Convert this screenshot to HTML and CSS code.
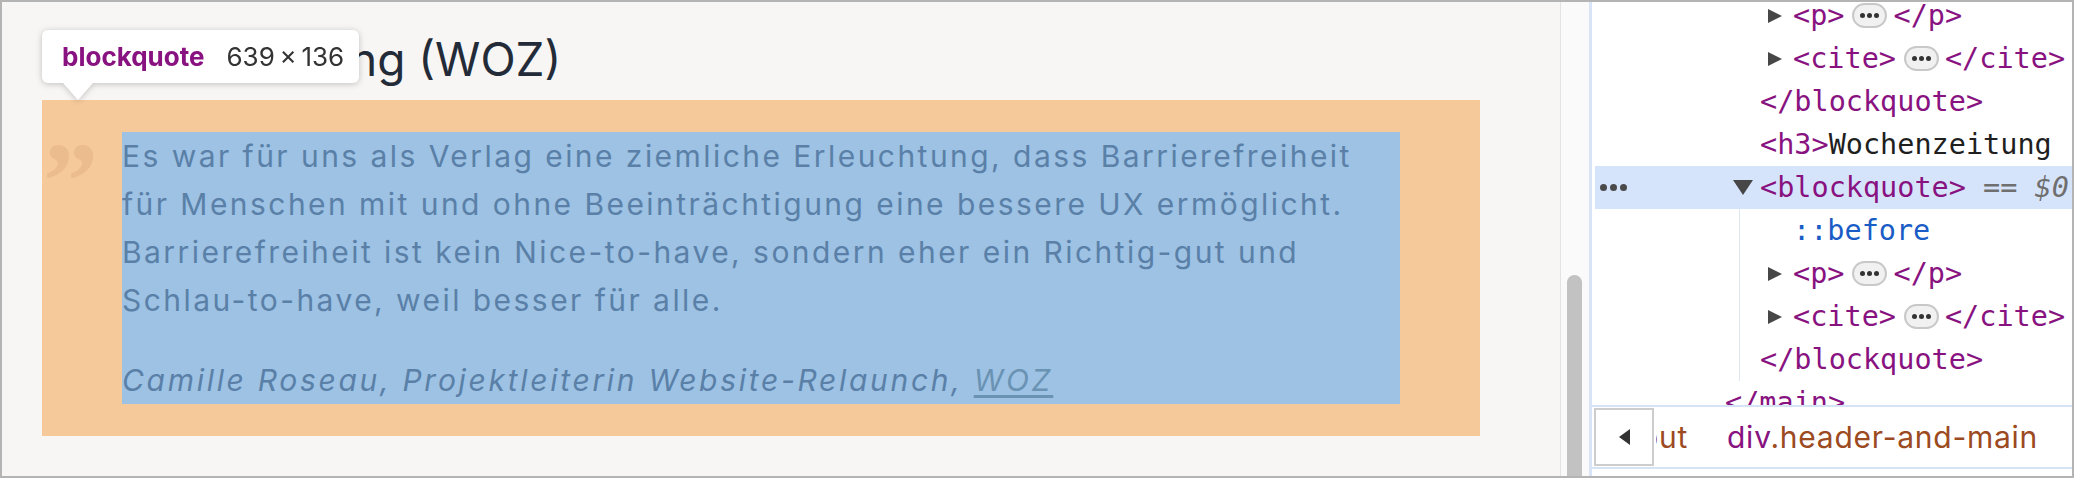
FILE: index.html
```html
<!DOCTYPE html>
<html lang="de">
<head>
<meta charset="utf-8">
<title>Blockquote inspect</title>
<link rel="stylesheet" href="styles.css">
</head>
<body>
<div class="frame">
  <main class="page">
    <h3 class="title">Wochenzeitung (WOZ)</h3>
    <div class="bq-margin">
      <span class="quote-mark">&rdquo;</span>
      <blockquote class="bq">
        <p>Es war für uns als Verlag eine ziemliche Erleuchtung, dass Barrierefreiheit<br>für Menschen mit und ohne Beeinträchtigung eine bessere UX ermöglicht.<br>Barrierefreiheit ist kein Nice-to-have, sondern eher ein Richtig-gut und<br>Schlau-to-have, weil besser für alle.</p>
        <cite>Camille Roseau, Projektleiterin Website-Relaunch, <a href="#">WOZ</a></cite>
      </blockquote>
    </div>
    <div class="tooltip"><span class="tt-tag">blockquote</span><span class="tt-size">639&thinsp;×&thinsp;136</span></div>
  </main>
  <div class="divider"></div>
  <div class="track"><div class="thumb"></div></div>
  <section class="devtools">
    <div class="tree">
      <div class="tree-inner">
        <div class="row l3"><span class="tw"></span><span class="tag">&lt;p&gt;</span><span class="pill"><i></i><i></i><i></i></span><span class="tag">&lt;/p&gt;</span></div>
        <div class="row l3"><span class="tw"></span><span class="tag">&lt;cite&gt;</span><span class="pill"><i></i><i></i><i></i></span><span class="tag">&lt;/cite&gt;</span></div>
        <div class="row l2"><span class="tag">&lt;/blockquote&gt;</span></div>
        <div class="row l2"><span class="tag">&lt;h3&gt;</span><span class="txt">Wochenzeitung (WOZ)</span></div>
        <div class="row sel"><span class="dots"><i></i><i></i><i></i></span><span class="tw-open"></span><span class="tag">&lt;blockquote&gt;</span><span class="eq"> == <em>$0</em></span></div>
        <div class="children">
          <div class="row c3"><span class="pseudo">::before</span></div>
          <div class="row c3"><span class="tw"></span><span class="tag">&lt;p&gt;</span><span class="pill"><i></i><i></i><i></i></span><span class="tag">&lt;/p&gt;</span></div>
          <div class="row c3"><span class="tw"></span><span class="tag">&lt;cite&gt;</span><span class="pill"><i></i><i></i><i></i></span><span class="tag">&lt;/cite&gt;</span></div>
          <div class="row c2"><span class="tag">&lt;/blockquote&gt;</span></div>
        </div>
        <div class="row l1"><span class="tag">&lt;/main&gt;</span></div>
      </div>
    </div>
    <div class="crumbs">
      <div class="crumb-btn"><span class="left-tri"></span></div>
      <div class="crumb-clip"><span class="cls">about</span></div>
      <div class="crumb"><span class="ctag">div</span><span class="cls">.header-and-main</span></div>
    </div>
  </section>
</div>
</body>
</html>
```
FILE: styles.css
```css
* { box-sizing: border-box; }
html, body { margin: 0; padding: 0; }
body { width: 2074px; height: 478px; overflow: hidden; background: #fff; }

.frame {
  width: 2074px;
  height: 478px;
  border: 2px solid #b4b4b4;
  display: flex;
  overflow: hidden;
}

/* ---------- page ---------- */
.page {
  position: relative;
  width: 1558px;
  flex: none;
  background: #f7f6f4;
  padding-left: 40px;
  font-family: Inter, "Open Sans", sans-serif;
}
.title {
  margin: 0 0 12px;
  padding-top: 28px;
  padding-left: 25px;
  height: 86px;
  font-size: 46px;
  line-height: 58px;
  font-weight: 400;
  color: #232b38;
  white-space: nowrap;
}
.bq-margin {
  position: relative;
  width: 1438px;
  background: #f6c99a;
  padding: 32px 80px;
}
.quote-mark {
  position: absolute;
  left: 1px;
  top: 26px;
  font-family: "Liberation Serif", serif;
  font-size: 110px;
  line-height: 110px;
  font-weight: 700;
  color: #eabc8e;
}
.bq {
  margin: 0;
  background: #9dc2e4;
  color: #5a80a8;
  font-size: 30px;
  line-height: 48px;
}
.bq p { margin: 0 0 32px; white-space: nowrap; letter-spacing: 2.45px; }
.bq cite { display: block; font-style: italic; white-space: nowrap; letter-spacing: 2.7px; }
.bq cite a { color: #6a92b3; text-decoration: underline; text-underline-offset: 4px; }

.tooltip {
  position: absolute;
  left: 40px;
  top: 28px;
  width: 317px;
  height: 53px;
  background: #fff;
  border-radius: 6px;
  filter: drop-shadow(0 1px 3px rgba(0, 0, 0, 0.22));
  display: flex;
  align-items: center;
  padding-left: 20px;
  font-size: 26px;
  white-space: nowrap;
}
.tooltip::after {
  content: "";
  position: absolute;
  left: 21px;
  top: 53px;
  border-left: 15px solid transparent;
  border-right: 15px solid transparent;
  border-top: 17px solid #fff;
}
.tt-tag { color: #881280; font-weight: 700; }
.tt-size { color: #333; margin-left: 22px; }

/* ---------- scrollbar ---------- */
.divider { width: 1px; flex: none; background: #e3e3e3; }
.track {
  width: 28px;
  flex: none;
  background: #fafafa;
  display: flex;
  flex-direction: column;
  padding-top: 273px;
  padding-left: 6px;
}
.thumb { width: 15px; flex: 1; background: #c2c2c2; border-radius: 8px 8px 0 0; }

/* ---------- devtools ---------- */
.devtools {
  flex: 1;
  min-width: 0;
  border-left: 3px solid #d9e5f7;
  background: #fff;
  display: flex;
  flex-direction: column;
}
.tree { height: 403px; flex: none; overflow: hidden; }
.tree-inner { margin-top: -8px; }
.row {
  height: 43px;
  display: flex;
  align-items: center;
  white-space: nowrap;
  font-family: "DejaVu Sans Mono", "Liberation Mono", monospace;
  font-size: 28.5px;
  color: #1f1f1f;
}
.l1 { padding-left: 133px; }
.l2 { padding-left: 168px; }
.l3 { padding-left: 201px; }
.children { margin-left: 147px; border-left: 1px solid #dfe5ee; }
.c2 { padding-left: 20px; }
.c3 { padding-left: 53px; }
.row.sel { background: #d6e4fb; margin-left: 3px; padding-left: 5px; }

.tag { color: #881280; }
.txt { color: #1f1f1f; }
.pseudo { color: #1a5cc6; }
.eq { color: #6f6f6f; white-space: pre; }
.eq em { font-style: italic; }

.tw {
  width: 0;
  height: 0;
  margin-left: -25px;
  margin-right: 11px;
  border-left: 14px solid #474747;
  border-top: 7.5px solid transparent;
  border-bottom: 7.5px solid transparent;
}
.tw-open {
  width: 0;
  height: 0;
  margin-right: 7px;
  border-top: 15px solid #474747;
  border-left: 10px solid transparent;
  border-right: 10px solid transparent;
}
.dots { display: flex; gap: 3px; width: 27px; margin-right: 106px; }
.dots i { width: 7px; height: 7px; border-radius: 50%; background: #4a4a4a; }

.pill {
  display: inline-flex;
  align-items: center;
  justify-content: center;
  gap: 2px;
  width: 35px;
  height: 25px;
  margin: 0 6px 0 8px;
  border: 2px solid #c8c8c8;
  border-radius: 13px;
  background: #f1f1f1;
}
.pill i { width: 5px; height: 5px; border-radius: 50%; background: #333; }

.crumbs {
  height: 64px;
  flex: none;
  border-top: 2px solid #d6e2f5;
  border-bottom: 2px solid #d6e2f5;
  display: flex;
  align-items: center;
  font-family: Inter, "Liberation Sans", sans-serif;
  font-size: 30px;
  letter-spacing: 0.75px;
  white-space: nowrap;
}
.crumb-btn {
  width: 60px;
  height: 58px;
  flex: none;
  margin-left: 2px;
  border: 2px solid #cdcdcd;
  display: flex;
  align-items: center;
  justify-content: center;
}
.left-tri {
  width: 0;
  height: 0;
  border-right: 11px solid #333;
  border-top: 8px solid transparent;
  border-bottom: 8px solid transparent;
}
.crumb-clip {
  width: 32px;
  flex: none;
  overflow: hidden;
  display: flex;
  justify-content: flex-end;
  margin-left: 2px;
  margin-right: 39px;
}
.ctag { color: #881280; }
.cls { color: #9c4a1f; }
```
